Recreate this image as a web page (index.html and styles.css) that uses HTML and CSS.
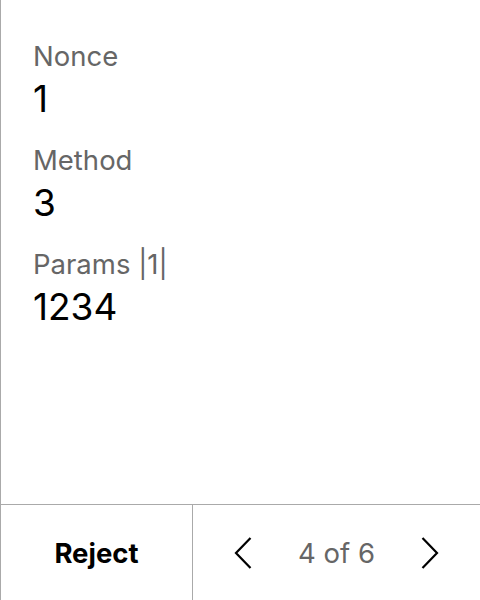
FILE: index.html
```html
<!DOCTYPE html>
<html>
<head>
<meta charset="utf-8">
<link rel="stylesheet" href="styles.css">
</head>
<body>
<div class="panel">
  <div class="content">
    <div class="field">
      <div class="label">Nonce</div>
      <div class="value">1</div>
    </div>
    <div class="field">
      <div class="label">Method</div>
      <div class="value">3</div>
    </div>
    <div class="field">
      <div class="label">Params |1|</div>
      <div class="value">1234</div>
    </div>
  </div>
  <div class="footer">
    <div class="reject">Reject</div>
    <div class="pager">
      <svg class="chev" width="18" height="32" viewBox="0 0 18 32"><path d="M16.5 1 L2 16 L16.5 31" fill="none" stroke="#000" stroke-width="2.2"/></svg>
      <span class="count">4 of 6</span>
      <svg class="chev" width="18" height="32" viewBox="0 0 18 32"><path d="M1.5 1 L16 16 L1.5 31" fill="none" stroke="#000" stroke-width="2.2"/></svg>
    </div>
  </div>
</div>
</body>
</html>
```
FILE: styles.css
```css
html, body {
  margin: 0;
  padding: 0;
  background: #fff;
}
body {
  font-family: Inter, "Noto Sans", sans-serif;
  width: 480px;
  height: 600px;
  overflow: hidden;
}
.panel {
  box-sizing: border-box;
  height: 600px;
  border-left: 1px solid #aaa;
  display: flex;
  flex-direction: column;
}
.content {
  flex: 1;
  padding: 40px 0 0 32px;
}
.field {
  margin-bottom: 22px;
}
.label {
  font-size: 27.5px;
  line-height: 32px;
  color: #666;
}
.value {
  font-size: 37px;
  line-height: 46px;
  color: #000;
  margin-top: 4px;
}
.footer {
  box-sizing: border-box;
  height: 96px;
  flex: none;
  border-top: 1px solid #aaa;
  display: flex;
}
.reject {
  width: 191px;
  border-right: 1px solid #aaa;
  display: flex;
  align-items: center;
  justify-content: center;
  font-size: 27.5px;
  font-weight: 700;
  color: #000;
}
.pager {
  flex: 1;
  display: flex;
  align-items: center;
  justify-content: center;
  gap: 46px;
}
.count {
  font-size: 27.5px;
  color: #666;
}
```
